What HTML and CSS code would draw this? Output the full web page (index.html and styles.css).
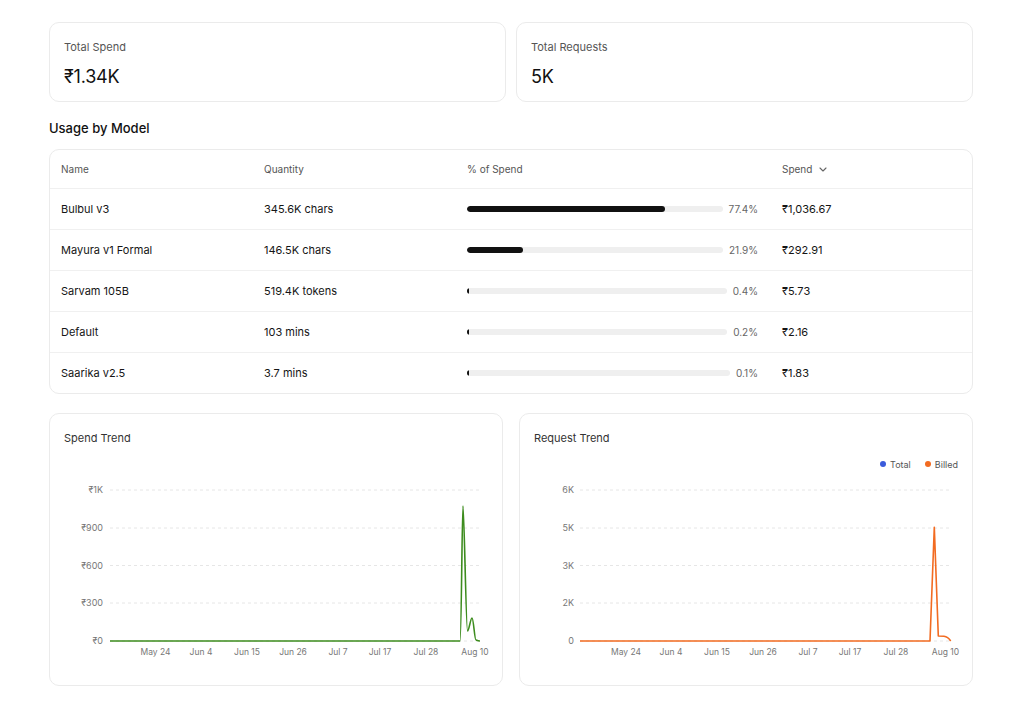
FILE: index.html
```html
<!DOCTYPE html>
<html lang="en">
<head>
<meta charset="utf-8">
<title>Usage</title>
<link rel="stylesheet" href="styles.css">
</head>
<body>
<div class="page">
  <div class="stats">
    <div class="stat-card">
      <div class="stat-label">Total Spend</div>
      <div class="stat-value">₹1.34K</div>
    </div>
    <div class="stat-card">
      <div class="stat-label">Total Requests</div>
      <div class="stat-value">5K</div>
    </div>
  </div>

  <h2 class="section-title">Usage by Model</h2>

  <div class="table-card">
    <div class="row thead">
      <div>Name</div>
      <div>Quantity</div>
      <div>% of Spend</div>
      <div class="sort">Spend <svg class="chev" width="8" height="5" viewBox="0 0 8 5"><path d="M1 1l3 3 3-3" fill="none" stroke="#666" stroke-width="1.1" stroke-linecap="round" stroke-linejoin="round"/></svg></div>
    </div>
    <div class="row">
      <div>Bulbul v3</div>
      <div>345.6K chars</div>
      <div class="pct"><div class="track"><div class="fill" style="width:77.4%"></div></div><span class="pct-text">77.4%</span></div>
      <div>₹1,036.67</div>
    </div>
    <div class="row">
      <div>Mayura v1 Formal</div>
      <div>146.5K chars</div>
      <div class="pct"><div class="track"><div class="fill" style="width:21.9%"></div></div><span class="pct-text">21.9%</span></div>
      <div>₹292.91</div>
    </div>
    <div class="row">
      <div>Sarvam 105B</div>
      <div>519.4K tokens</div>
      <div class="pct"><div class="track"><div class="fill" style="width:0.4%"></div></div><span class="pct-text">0.4%</span></div>
      <div>₹5.73</div>
    </div>
    <div class="row">
      <div>Default</div>
      <div>103 mins</div>
      <div class="pct"><div class="track"><div class="fill" style="width:0.2%"></div></div><span class="pct-text">0.2%</span></div>
      <div>₹2.16</div>
    </div>
    <div class="row last">
      <div>Saarika v2.5</div>
      <div>3.7 mins</div>
      <div class="pct"><div class="track"><div class="fill" style="width:0.1%"></div></div><span class="pct-text">0.1%</span></div>
      <div>₹1.83</div>
    </div>
  </div>

  <div class="charts">
    <div class="chart-card">
      <div class="chart-title">Spend Trend</div>
      <div class="legend"></div>
      <svg class="chart" width="452" height="200" viewBox="0 0 452 200">
        <g class="grid">
          <line x1="60" y1="18" x2="429" y2="18"/>
          <line x1="60" y1="56" x2="429" y2="56"/>
          <line x1="60" y1="93.5" x2="429" y2="93.5"/>
          <line x1="60" y1="131" x2="429" y2="131"/>
          <line x1="60" y1="169" x2="429" y2="169"/>
        </g>
        <g class="ylab">
          <text x="53" y="21">₹1K</text>
          <text x="53" y="59">₹900</text>
          <text x="53" y="96.5">₹600</text>
          <text x="53" y="134">₹300</text>
          <text x="53" y="172">₹0</text>
        </g>
        <g class="xlab">
          <text x="105.5" y="182.5">May 24</text>
          <text x="151" y="182.5">Jun 4</text>
          <text x="197" y="182.5">Jun 15</text>
          <text x="243" y="182.5">Jun 26</text>
          <text x="288" y="182.5">Jul 7</text>
          <text x="330" y="182.5">Jul 17</text>
          <text x="376" y="182.5">Jul 28</text>
          <text x="425" y="182.5">Aug 10</text>
        </g>
        <path class="line-green" d="M60 169 L410 169 C411.5 169 412 34 413 34 C414.2 34 416 159 417.5 159 C419 159 420.5 146 422 146 C423.6 146 424.5 168 426 168 C427.5 168.6 429 169 430 169"/>
      </svg>
    </div>
    <div class="chart-card">
      <div class="chart-title">Request Trend</div>
      <div class="legend">
        <span class="lg"><i class="dot blue"></i>Total</span>
        <span class="lg"><i class="dot orange"></i>Billed</span>
      </div>
      <svg class="chart" width="452" height="200" viewBox="0 0 452 200">
        <g class="grid">
          <line x1="60" y1="18" x2="429" y2="18"/>
          <line x1="60" y1="56" x2="429" y2="56"/>
          <line x1="60" y1="93.5" x2="429" y2="93.5"/>
          <line x1="60" y1="131" x2="429" y2="131"/>
          <line x1="60" y1="169" x2="429" y2="169"/>
        </g>
        <g class="ylab">
          <text x="54" y="21">6K</text>
          <text x="54" y="59">5K</text>
          <text x="54" y="96.5">3K</text>
          <text x="54" y="134">2K</text>
          <text x="54" y="172">0</text>
        </g>
        <g class="xlab">
          <text x="106" y="182.5">May 24</text>
          <text x="151" y="182.5">Jun 4</text>
          <text x="197" y="182.5">Jun 15</text>
          <text x="243" y="182.5">Jun 26</text>
          <text x="288" y="182.5">Jul 7</text>
          <text x="330" y="182.5">Jul 17</text>
          <text x="376" y="182.5">Jul 28</text>
          <text x="425.5" y="182.5">Aug 10</text>
        </g>
        <path class="line-orange" d="M60 169 L410 169 L414.3 55.3 L418.3 164 L424 164.3 C426.5 164.6 429 166.5 430.7 169"/>
      </svg>
    </div>
  </div>
</div>
</body>
</html>
```

FILE: styles.css
```css
* { box-sizing: border-box; }

html, body {
  margin: 0;
  padding: 0;
  background: #ffffff;
}

body {
  font-family: "Inter", "Noto Sans", "DejaVu Sans", sans-serif;
  color: #111111;
}

.page {
  padding: 22px 51px 0 49px;
}

.stats {
  display: grid;
  grid-template-columns: 1fr 1fr;
  gap: 10px;
}

.stat-card {
  height: 80px;
  border: 1px solid #ebebeb;
  border-radius: 10px;
  padding: 17px 14px 0;
}

.stat-label {
  font-size: 11px;
  line-height: 14px;
  color: #555555;
}

.stat-value {
  margin-top: 11px;
  font-size: 18px;
  line-height: 24px;
  color: #111111;
  letter-spacing: -0.2px;
}

.section-title {
  margin: 18px 0 13px;
  font-size: 13px;
  line-height: 16px;
  font-weight: 500;
  color: #111111;
}

.table-card {
  border: 1px solid #ebebeb;
  border-radius: 10px;
  overflow: hidden;
}

.row {
  display: grid;
  grid-template-columns: 203px 203px 315px 1fr;
  align-items: center;
  height: 41px;
  padding-left: 11px;
  border-bottom: 1px solid #f0f0f0;
  font-size: 11px;
  color: #151515;
}

.row.thead {
  height: 39px;
  font-size: 10px;
  color: #555555;
}

.row.last {
  height: 40px;
  border-bottom: none;
}

.sort {
  display: flex;
  align-items: center;
  gap: 7px;
}

.chev { display: block; }

.pct {
  display: flex;
  align-items: center;
  gap: 6px;
  padding-right: 24px;
}

.track {
  flex: 1;
  height: 6px;
  border-radius: 3px;
  background: #efefef;
  overflow: hidden;
}

.fill {
  height: 100%;
  min-width: 2px;
  border-radius: 3px;
  background: #111111;
}

.pct-text {
  font-size: 10px;
  color: #666666;
}

.charts {
  display: grid;
  grid-template-columns: 1fr 1fr;
  gap: 16px;
  margin-top: 19px;
}

.chart-card {
  height: 273px;
  border: 1px solid #ebebeb;
  border-radius: 10px;
  padding-top: 16px;
}

.chart-title {
  padding: 0 14px;
  font-size: 11px;
  line-height: 16px;
  color: #333333;
}

.legend {
  display: flex;
  justify-content: flex-end;
  align-items: center;
  gap: 14px;
  height: 14px;
  margin-top: 11px;
  padding: 0 14px;
  font-size: 9px;
  color: #555555;
}

.lg {
  display: flex;
  align-items: center;
  gap: 4px;
}

.dot {
  display: block;
  width: 6px;
  height: 6px;
  border-radius: 50%;
}

.dot.blue { background: #3b5bdb; }
.dot.orange { background: #f26b21; }

.chart {
  display: block;
  margin-top: 1px;
}

.grid line {
  stroke: #e6e6e6;
  stroke-width: 1;
  stroke-dasharray: 3 3;
}

.ylab text {
  font-size: 9px;
  fill: #777777;
  text-anchor: end;
}

.xlab text {
  font-size: 8.5px;
  fill: #777777;
  text-anchor: middle;
}

.line-green {
  fill: none;
  stroke: #3d8c1e;
  stroke-width: 1.6;
  stroke-linejoin: round;
}

.line-orange {
  fill: none;
  stroke: #f26b21;
  stroke-width: 1.6;
  stroke-linejoin: round;
}
```
